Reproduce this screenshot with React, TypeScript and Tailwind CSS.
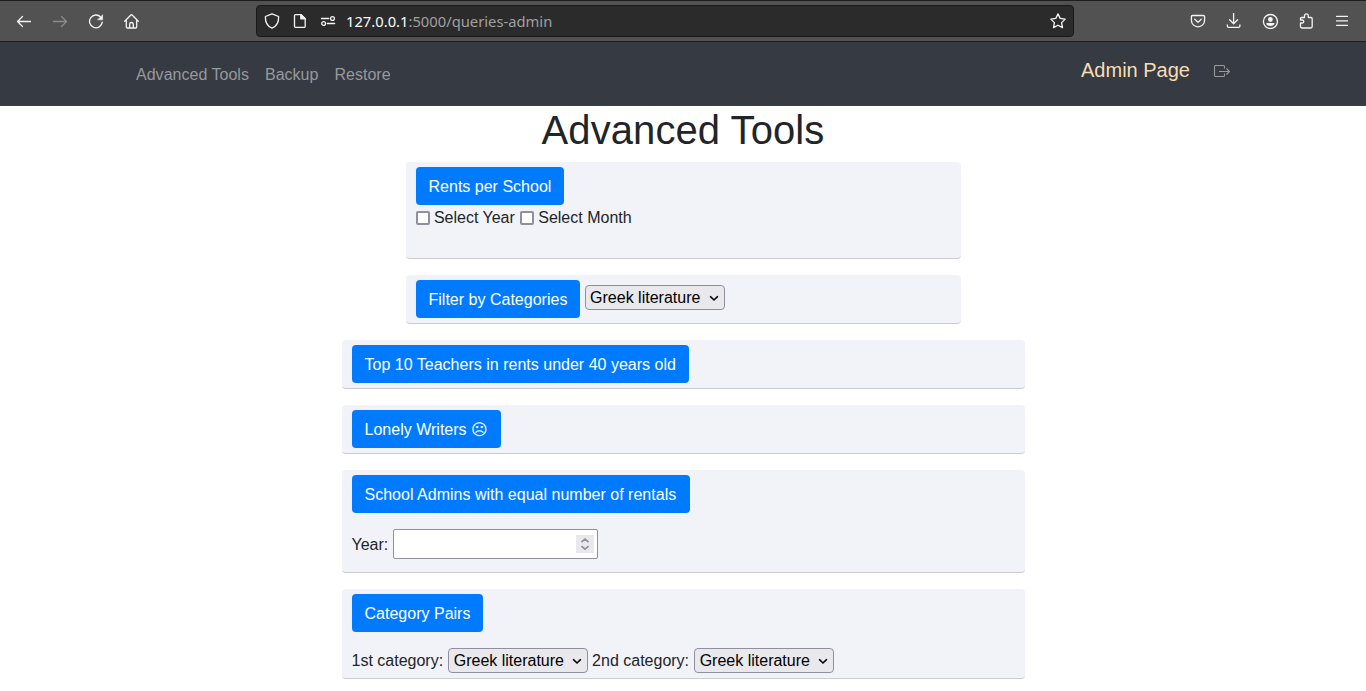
import React from "react";

type P = { children?: React.ReactNode; className?: string };

function Icon({ children, className = "" }: P) {
  return (
    <svg
      viewBox="0 0 16 16"
      width="16"
      height="16"
      fill="none"
      stroke="currentColor"
      strokeWidth="1.3"
      strokeLinecap="round"
      strokeLinejoin="round"
      className={"block shrink-0 " + className}
    >
      {children}
    </svg>
  );
}

function BrowserBar() {
  return (
    <div className="flex h-[42px] items-center border-b border-t border-[#1d1d1d] bg-[#525252] pl-4 pr-4 text-[#f4f4f4]">
      <div className="flex w-[240px] gap-5">
        <Icon>
          <path d="M14.500 8.500H1.500M6.500 3.500l-5 5 5 5" />
        </Icon>
        <Icon className="text-[#8b8b8b]">
          <path d="M1.500 8.500h13M9.500 3.500l5 5-5 5" />
        </Icon>
        <Icon>
          <path d="M12.700 4.100A6.400 6.400 0 1 0 14.300 9.200" />
          <path d="M14.600 2.100v4.700H9.900z" fill="currentColor" strokeWidth=".6" />
        </Icon>
        <Icon>
          <path d="M.7 8.300 6.900 2q.6-.6 1.200 0l6.200 6.300M2.300 7v6.700q0 1.300 1.300 1.300h7.800q1.300 0 1.300-1.300V7" />
          <path d="M5.700 14.700V11.200q0-1.700 1.800-1.700t1.800 1.700v3.500" />
        </Icon>
      </div>
      <div className="flex h-8 w-[818px] items-center rounded-[4px] border border-[#191919] bg-[#2b2b2b] px-[7px]">
        <Icon>
          <path d="M8 .8 14.600 3.500C14.900 8.800 12.300 13.400 8 15.200 3.700 13.400 1.100 8.800 1.400 3.500z" />
        </Icon>
        <Icon className="ml-3">
          <path d="M3.700 1.600h5.500l4 4v7.600q0 1.200-1.200 1.200H3.700q-1.200 0-1.200-1.200V2.800q0-1.200 1.200-1.200z" />
          <path d="M8.800 1.600v4.200h4.300z" fill="currentColor" />
        </Icon>
        <Icon className="ml-3">
          <path d="M1.500 5.500h7.300M7.300 10.500h7.300" />
          <circle cx="12.500" cy="5.500" r="1.900" />
          <circle cx="3.600" cy="10.500" r="1.900" />
        </Icon>
        <span className="ml-[10px] flex-1 whitespace-nowrap font-['Noto_Sans',sans-serif] text-[14.75px] leading-5 text-[#a0a0a0]">
          <span className="text-[#fbfbfe]">127.0.0.1</span>:5000/queries-admin
        </span>
        <Icon>
          <path d="m8 .9 2.200 4.500 5 .7-3.600 3.500.9 5L8 12.200l-4.500 2.400.9-5L.8 6.100l5-.7z" />
        </Icon>
      </div>
      <div className="ml-auto flex gap-5">
        <Icon>
          <path d="M2.700 2.500h10.600q1.300 0 1.300 1.300v3.400a6.600 6.600 0 0 1-13.200 0V3.800q0-1.300 1.300-1.300z" />
          <path d="M4.800 6.300 8 9.400l3.200-3.100" />
        </Icon>
        <Icon>
          <path d="M7.600 .5v10M3.600 6.700l4 4 4-4M1.300 11.800v1.300q0 1.300 1.300 1.300h10q1.300 0 1.300-1.300v-1.300" />
        </Icon>
        <Icon>
          <circle cx="8.400" cy="8.500" r="7" />
          <circle cx="8.400" cy="6.500" r="2.400" fill="currentColor" stroke="none" />
          <path d="M4.300 9.900h8.200c0 1.700-1.800 3.100-4.100 3.100s-4.100-1.400-4.100-3.100z" fill="currentColor" stroke="none" />
        </Icon>
        <Icon>
          <path d="M2.500 10v3.600q0 1.400 1.400 1.400h8.900q1.400 0 1.400-1.400V5.700q0-1.200-1.200-1.200h-2.700V2.800a1.900 1.900 0 0 0-3.800 0v1.700H3.700q-1.200 0-1.200 1.200V7h1.800a1.500 1.500 0 0 1 0 3z" />
        </Icon>
        <Icon>
          <path d="M2.500 3.400h11M2.500 7.900h11M2.500 12.300h11" strokeWidth="1.200" />
        </Icon>
      </div>
    </div>
  );
}

function NavBar() {
  return (
    <nav className="flex h-16 items-center border-b border-[#3e3d42] bg-[#363a42] px-[136px] text-[#97999c]">
      <div className="flex gap-4 pt-[2px] leading-6 tracking-[0.02px]">
        <a>Advanced Tools</a>
        <a>Backup</a>
        <a>Restore</a>
      </div>
      <div className="mb-[7px] ml-auto flex items-center">
        <a className="text-xl leading-[30px] text-[#f5deb3]">Admin Page</a>
        <svg
          viewBox="0 0 16 14"
          width="16"
          height="14"
          fill="none"
          stroke="currentColor"
          strokeWidth="1.100"
          className="ml-6 mt-px"
        >
          <path d="M10.500 4.500V2.500Q10.500 1.500 9.500 1.500H1.500Q.5 1.500.5 2.500v9q0 1 1 1h8q1 0 1-1v-2M5 7.500h10.500M12.500 4.500l3 3-3 3" />
        </svg>
      </div>
    </nav>
  );
}

function Card({ children, className = "" }: P) {
  return (
    <section
      className={
        "mb-4 rounded-[4px] border-b border-[#ccc] bg-[#f2f3f8] px-[10px] pt-[5px] " + className
      }
    >
      {children}
    </section>
  );
}

function Button({ children, className = "" }: P) {
  return (
    <button
      className={
        "block h-[38px] shrink-0 whitespace-nowrap rounded-[4px] bg-[#007bff] px-[13px] pb-[6px] pt-2 text-left leading-6 tracking-[0.01px] text-white " +
        className
      }
    >
      {children}
    </button>
  );
}

function CategorySelect({ className = "" }: P) {
  return (
    <div
      className={
        "flex h-[25px] w-[140px] shrink-0 items-center justify-between rounded-[4px] border border-[#8f8f9d] bg-[#e9e9ed] pl-[4.6px] pr-[5px] leading-[23px] text-black " +
        className
      }
    >
      <span className="whitespace-nowrap">Greek literature</span>
      <svg viewBox="0 0 10 10" width="10" height="10" fill="none" stroke="black" strokeWidth="1.600">
        <path d="M1.500 3.700 5 7 8.500 3.700" strokeLinecap="round" strokeLinejoin="round" />
      </svg>
    </div>
  );
}

function Check({ children }: P) {
  return (
    <label className="flex items-start">
      <span className="mr-[4.400px] mt-[6px] h-[14px] w-[14px] rounded-[2px] border-2 border-[#8f8f9d] bg-white" />
      <span className="pt-px">{children}</span>
    </label>
  );
}

export default function App() {
  return (
    <div className="h-[691px] overflow-hidden bg-white font-['Liberation_Sans',Arial,sans-serif] text-base text-[#212529]">
      <BrowserBar />
      <NavBar />
      <main className="flex flex-col items-center">
        <h1 className="mb-2 h-12 text-[40px] font-medium leading-[48px] tracking-[0.08px]">
          Advanced Tools
        </h1>
        <Card className="h-[97px] w-[555px]">
          <Button className="w-[148px]">Rents per School</Button>
          <div className="flex gap-[5px] leading-6">
            <Check>Select Year</Check>
            <Check>Select Month</Check>
          </div>
        </Card>
        <Card className="flex h-[49px] w-[555px]">
          <Button className="w-[164px]">Filter by Categories</Button>
          <CategorySelect className="ml-[5px] mt-[5px]" />
        </Card>
        <Card className="h-[49px] w-[683px]">
          <Button className="w-[337px]">Top 10 Teachers in rents under 40 years old</Button>
        </Card>
        <Card className="h-[49px] w-[683px]">
          <Button className="w-[149px]">
            Lonely Writers <span className="font-['DejaVu_Sans',sans-serif]">☹</span>
          </Button>
        </Card>
        <Card className="h-[103px] w-[683px]">
          <Button className="w-[338px]">School Admins with equal number of rentals</Button>
          <div className="mt-4 flex h-[30px] items-center">
            <span className="pt-[2px]">Year:</span>
            <div className="ml-[5px] flex h-[30px] w-[205px] items-center justify-end rounded-[2px] border border-[#8f8f9d] bg-white pr-[3px]">
              <div className="flex h-[18px] w-[18px] items-center justify-center bg-[#e9e9ed]">
                <svg viewBox="0 0 10 14" width="10" height="14" fill="none" stroke="#8f8f9d" strokeWidth="1.700">
                  <path d="M2 4.600 5 2l3 2.600M2 9.600l3 2.600 3-2.600" strokeLinecap="round" />
                </svg>
              </div>
            </div>
          </div>
        </Card>
        <Card className="h-[90px] w-[683px]">
          <Button className="w-[131px]">Category Pairs</Button>
          <div className="mt-4 flex items-center">
            1st category:
            <CategorySelect className="ml-[5px] mr-[4px]" />
            2nd category:
            <CategorySelect className="ml-[5px]" />
          </div>
        </Card>
      </main>
    </div>
  );
}
